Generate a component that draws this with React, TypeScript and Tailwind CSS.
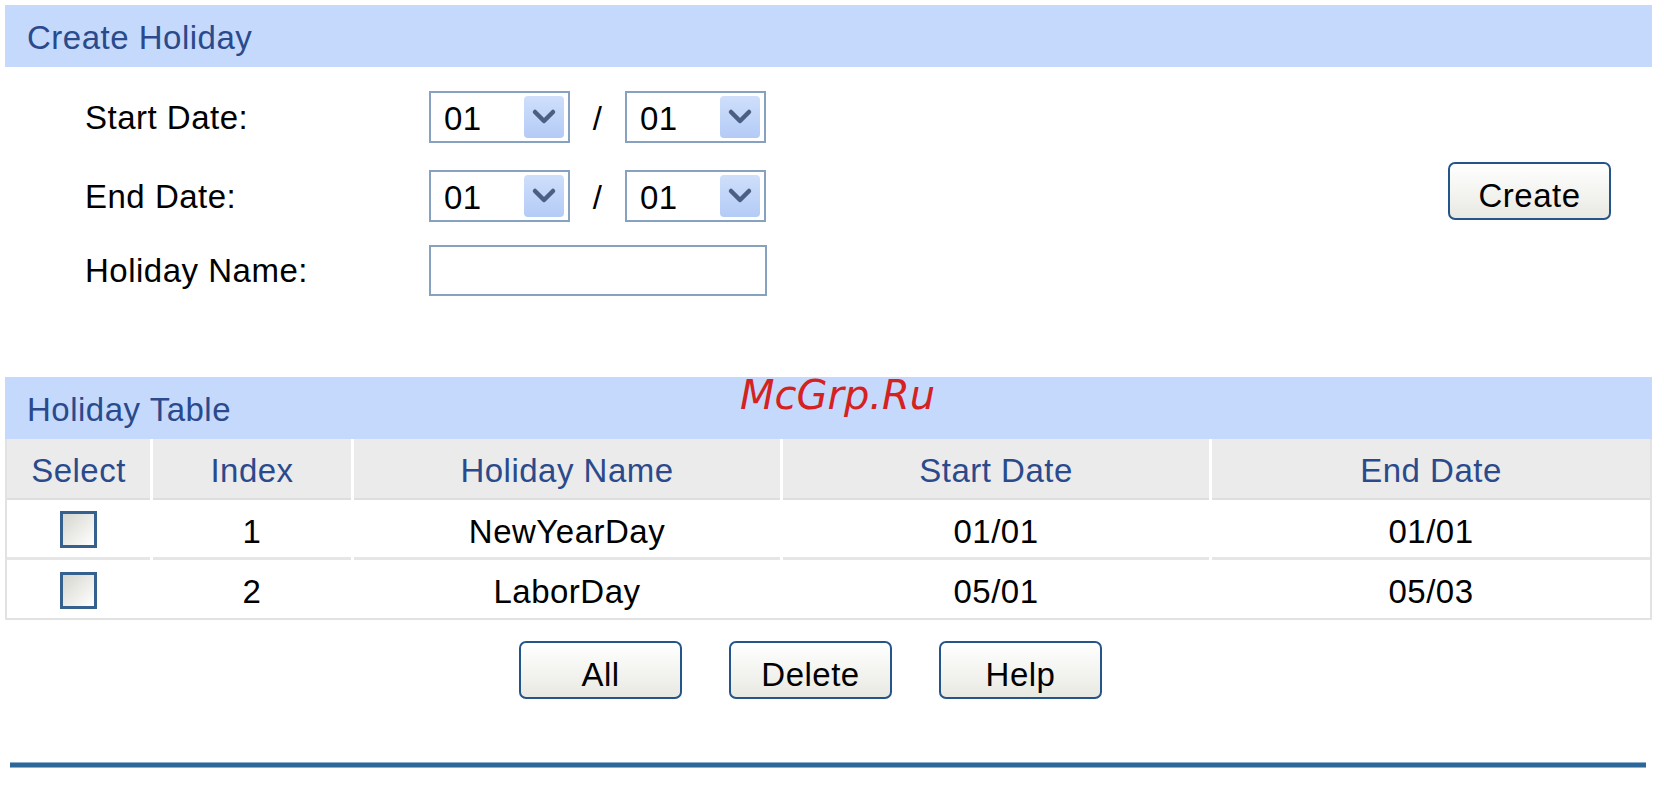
const FONT = "font-['Liberation_Sans',Arial,sans-serif]";

// A little XP-style drop button with a chunky chevron.
function DropArrow() {
  return (
    <div className="flex h-[42px] w-[40px] items-center justify-center rounded-[4px] bg-gradient-to-b from-[#cfdffb] to-[#b4cbf6]">
      <svg width="26" height="18" viewBox="0 0 26 18" aria-hidden>
        <polyline
          points="4,4 13,13 22,4"
          fill="none"
          stroke="#4b5f84"
          strokeWidth="4.5"
          strokeLinecap="round"
          strokeLinejoin="round"
        />
      </svg>
    </div>
  );
}

function DateSelect({ value }: { value: string }) {
  return (
    <div className="flex h-[52px] w-[141px] items-center justify-between border-2 border-[#86a2c0] bg-white pl-[13px] pr-[4px]">
      <span className="pt-[2px]">{value}</span>
      <DropArrow />
    </div>
  );
}

function DatePair() {
  return (
    <div className="flex items-center">
      <DateSelect value="01" />
      <span className="w-[55px] pt-[2px] text-center">/</span>
      <DateSelect value="01" />
    </div>
  );
}

function XpButton({ label }: { label: string }) {
  return (
    <button className="flex h-[58px] w-[163px] items-center justify-center rounded-[7px] border-2 border-[#24558a] bg-gradient-to-b from-white to-[#e9e9e3] pt-[9px] text-black">
      {label}
    </button>
  );
}

function Checkbox() {
  return (
    <div className="h-[37px] w-[37px] border-[3px] border-[#36618e] bg-gradient-to-br from-[#d6d6cf] to-white" />
  );
}

const COLS = "grid grid-cols-[143px_198px_426px_426px_1fr] gap-x-[3px]";

const ROWS = [
  { index: "1", name: "NewYearDay", start: "01/01", end: "01/01" },
  { index: "2", name: "LaborDay", start: "05/01", end: "05/03" },
];

export default function App() {
  return (
    <div
      className={`relative h-[787px] w-[1664px] overflow-hidden bg-white pt-[5px] text-[33px] leading-none tracking-[0.5px] text-black ${FONT}`}
    >
      <div className="ml-[5px] w-[1647px]">
        {/* Create Holiday */}
        <div className="flex h-[62px] items-center bg-[#c5d9fc] pl-[22px] pt-[2px] text-[#2a4a8c]">
          Create Holiday
        </div>
        <div className="flex justify-between pt-[24px]">
          <div className="flex flex-col pl-[80px]">
            <div className="flex h-[52px] items-center">
              <span className="w-[344px]">Start Date:</span>
              <DatePair />
            </div>
            <div className="mt-[27px] flex h-[52px] items-center">
              <span className="w-[344px]">End Date:</span>
              <DatePair />
            </div>
            <div className="mt-[23px] flex h-[51px] items-center">
              <span className="w-[344px]">Holiday Name:</span>
              <div className="h-[51px] w-[338px] border-2 border-[#86a2c0] bg-white" />
            </div>
          </div>
          <div className="mr-[41px] mt-[71px]">
            <XpButton label="Create" />
          </div>
        </div>

        {/* Holiday Table */}
        <div className="mt-[81px] flex h-[62px] items-center bg-[#c5d9fc] pl-[22px] pt-[2px] text-[#2a4a8c]">
          Holiday Table
        </div>
        <div className="border-x-2 border-b-2 border-[#e2e2e2]">
          <div className={`${COLS} h-[61px]`}>
            {["Select", "Index", "Holiday Name", "Start Date", "End Date"].map((h) => (
              <div
                key={h}
                className="flex items-center justify-center border-b-2 border-[#dedede] bg-[#ebebeb] pt-[3px] text-[#2a4a8c]"
              >
                {h}
              </div>
            ))}
          </div>
          {ROWS.map((r, i) => (
            <div key={r.index} className={`${COLS} ${i === 0 ? "h-[60px]" : "h-[58px]"}`}>
              {[<Checkbox key="c" />, r.index, r.name, r.start, r.end].map((cell, j) => (
                <div
                  key={j}
                  className={`flex items-center justify-center bg-white ${j > 0 ? "pt-[5px]" : "pt-[2px]"} ${
                    i === 0 ? "border-b-[3px] border-[#e6e6e6]" : ""
                  }`}
                >
                  {cell}
                </div>
              ))}
            </div>
          ))}
        </div>

        <div className="mt-[21px] flex gap-[47px] pl-[514px]">
          <XpButton label="All" />
          <XpButton label="Delete" />
          <XpButton label="Help" />
        </div>
      </div>

      <div className="ml-[10px] mt-[63px] h-[6px] w-[1636px] border-y border-[#8db0cf] bg-[#2c6797]" />

      {/* watermark over the table header */}
      <span className="absolute left-[740px] top-[375px] font-['DejaVu_Sans',sans-serif] text-[40px] italic leading-[40px] tracking-normal text-[#d42222]">
        McGrp.Ru
      </span>
    </div>
  );
}
